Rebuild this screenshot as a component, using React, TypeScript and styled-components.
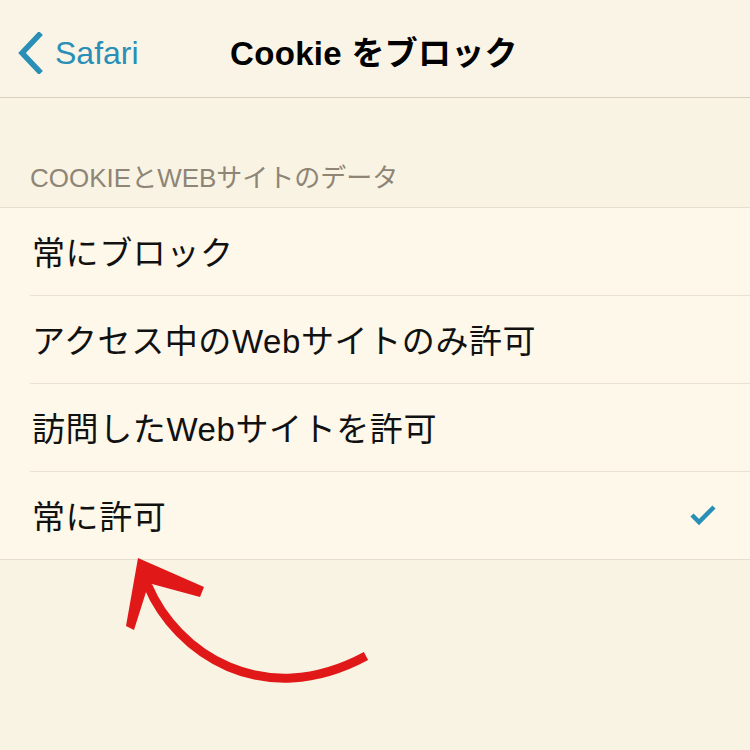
import styled, { createGlobalStyle } from "styled-components"

const Global = createGlobalStyle`
	html, body {
		margin: 0;
		padding: 0;
		background: #f9f3e4;
	}
`

const Screen = styled.div`
	position: relative;
	width: 750px;
	height: 750px;
	overflow: hidden;
	background: #f9f3e4;
	font-family: "Liberation Sans", "Noto Sans CJK JP", sans-serif;
`

const NavBar = styled.div`
	position: relative;
	height: 97px;
	display: flex;
	align-items: center;
	justify-content: center;
	border-bottom: 1px solid #d8cfbc;
	background: #faf4e6;
`

const BackButton = styled.div`
	position: absolute;
	left: 17px;
	top: 32px;
	display: flex;
	align-items: center;
	gap: 12px;
	color: #2a8fb6;
	font-size: 32px;
	line-height: 40px;
`

const Title = styled.div`
	margin-left: -2px;
	margin-top: 4px;
	font-size: 33px;
	font-weight: bold;
	color: #000;
	letter-spacing: 0.3px;
`

const SectionHeader = styled.div`
	height: 109px;
	display: flex;
	align-items: flex-end;
	padding: 0 30px 14px;
	box-sizing: border-box;
	font-size: 26px;
	line-height: 30px;
	color: #8e8576;
`

const Group = styled.div`
	background: #fdf8ea;
	border-top: 1px solid #e6dfcf;
	border-bottom: 1px solid #e6dfcf;
`

const Row = styled.div<{ $last?: boolean }>`
	height: 87px;
	margin-left: 30px;
	padding-right: 32px;
	display: flex;
	align-items: center;
	justify-content: space-between;
	border-bottom: ${(p) => (p.$last ? "none" : "1px solid #e9e2d2")};
`

const RowLabel = styled.span`
	padding-left: 2px;
	margin-top: -2px;
	font-size: 33px;
	color: #111;
	font-family: "Noto Sans CJK JP", sans-serif;
	font-weight: 400;
	letter-spacing: 0.6px;
`

const Latin = styled.span`
	font-family: "Liberation Sans", sans-serif;
`

const Arrow = styled.svg`
	position: absolute;
	left: 0;
	top: 0;
	pointer-events: none;
`

function Chevron() {
	return (
		<svg width="26" height="42" viewBox="0 0 26 42">
			<path d="M22 3 L5 21 L22 39" fill="none" stroke="#2a8fb6" strokeWidth="5.5" strokeLinecap="square" />
		</svg>
	)
}

function Check() {
	return (
		<svg width="28" height="22" viewBox="0 0 28 22">
			<path d="M2 10 L9 17 L24 2" fill="none" stroke="#2a8fb6" strokeWidth="4.5" />
		</svg>
	)
}

const rows = [
	{ parts: ["常にブロック"], checked: false },
	{ parts: ["アクセス中の", "Web", "サイトのみ許可"], checked: false },
	{ parts: ["訪問した", "Web", "サイトを許可"], checked: false },
	{ parts: ["常に許可"], checked: true },
]

export default function App() {
	return (
		<Screen>
			<Global />
			<NavBar>
				<BackButton>
					<Chevron />
					<span>Safari</span>
				</BackButton>
				<Title>Cookie をブロック</Title>
			</NavBar>
			<SectionHeader>COOKIEとWEBサイトのデータ</SectionHeader>
			<Group>
				{rows.map((r, i) => (
					<Row key={i} $last={i === rows.length - 1}>
						<RowLabel>
							{r.parts.map((t, j) => (t === "Web" ? <Latin key={j}>{t}</Latin> : t))}
						</RowLabel>
						{r.checked && <Check />}
					</Row>
				))}
			</Group>
			<Arrow width="750" height="750" viewBox="0 0 750 750">
				<path d="M148 586 C 176 652, 262 712, 366 656" fill="none" stroke="#e01818" strokeWidth="9" />
				<polygon points="138,558 126,626 134,630 146,592 152,584 200,597 204,587" fill="#e01818" />
			</Arrow>
		</Screen>
	)
}
